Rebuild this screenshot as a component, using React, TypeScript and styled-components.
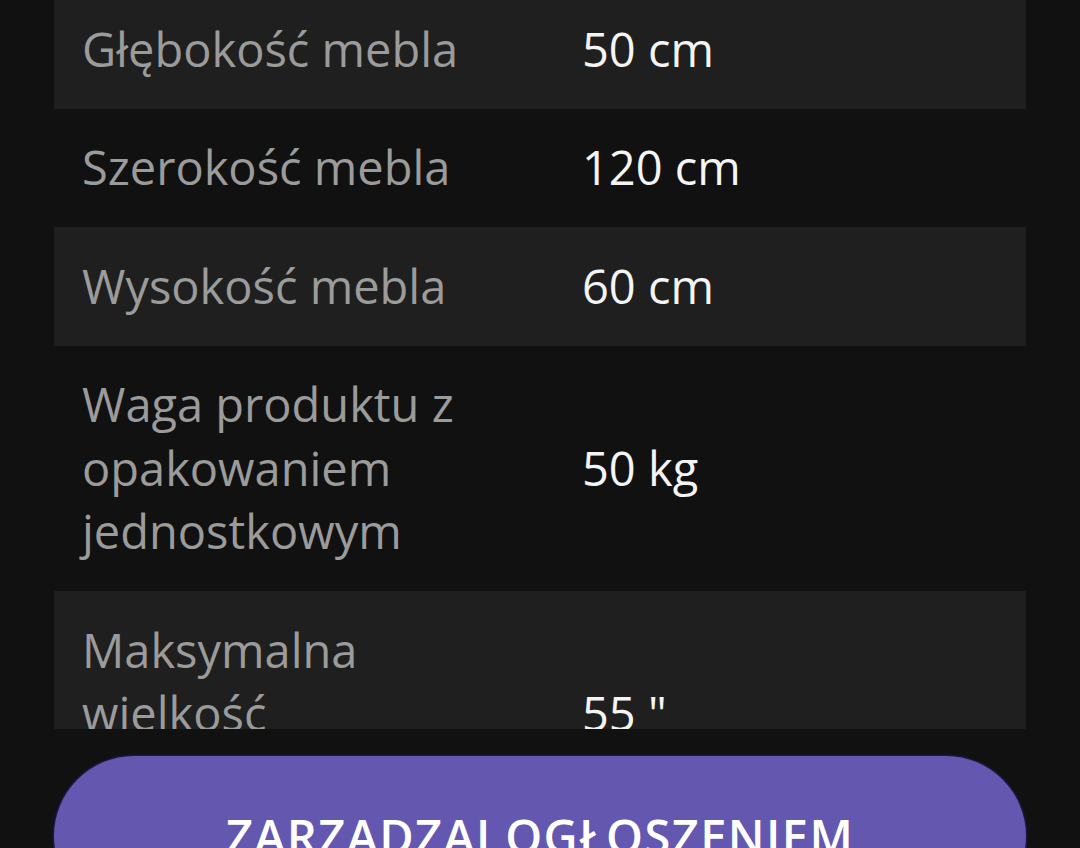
import React from "react";
import styled, { createGlobalStyle } from "styled-components";

const GlobalStyle = createGlobalStyle`
  html, body {
    margin: 0;
    padding: 0;
    background: #111111;
  }
  body {
    font-family: "Open Sans", "Noto Sans", sans-serif;
  }
`;

const Page = styled.div`
  height: 848px;
  display: flex;
  flex-direction: column;
  overflow: hidden;
  background: #111111;
`;

const Scroller = styled.div`
  flex: none;
  height: 729px;
  overflow: hidden;
  padding: 0 54px;
`;

const Table = styled.div`
  margin-top: -10px;
  display: flex;
  flex-direction: column;
`;

const Row = styled.div<{ $shaded: boolean }>`
  display: grid;
  grid-template-columns: 400px 1fr;
  column-gap: 100px;
  align-items: center;
  padding: 27.5px 28px;
  background: ${(p) => (p.$shaded ? "#1f1f1f" : "#111111")};
  font-size: 47px;
  line-height: 63.5px;
`;

const Label = styled.div`
  color: #9b9b9b;
`;

const Value = styled.div`
  color: #f4f4f4;
`;

const Footer = styled.div`
  flex: none;
  padding: 27px 54px 0;
`;

const ManageButton = styled.button`
  display: flex;
  align-items: center;
  justify-content: center;
  width: 100%;
  height: 160px;
  border-radius: 80px;
  border: none;
  box-shadow: 0 0 0 1.5px #1b1742;
  background: #6457b0;
  color: #ffffff;
  font-family: "Open Sans", "Noto Sans", sans-serif;
  font-size: 47px;
  font-weight: 600;
  letter-spacing: 0.03em;
  text-transform: uppercase;
  cursor: pointer;
`;

const specs = [
  { label: "Głębokość mebla", value: "50 cm" },
  { label: "Szerokość mebla", value: "120 cm" },
  { label: "Wysokość mebla", value: "60 cm" },
  { label: "Waga produktu z opakowaniem jednostkowym", value: "50 kg" },
  { label: "Maksymalna wielkość telewizora", value: '55 "' },
  { label: "Kolor", value: "Czarny" },
];

export default function App() {
  return (
    <>
      <GlobalStyle />
      <Page>
        <Scroller>
          <Table>
            {specs.map((s, i) => (
              <Row key={s.label} $shaded={i % 2 === 0}>
                <Label>{s.label}</Label>
                <Value>{s.value}</Value>
              </Row>
            ))}
          </Table>
        </Scroller>
        <Footer>
          <ManageButton>Zarządzaj ogłoszeniem</ManageButton>
        </Footer>
      </Page>
    </>
  );
}
